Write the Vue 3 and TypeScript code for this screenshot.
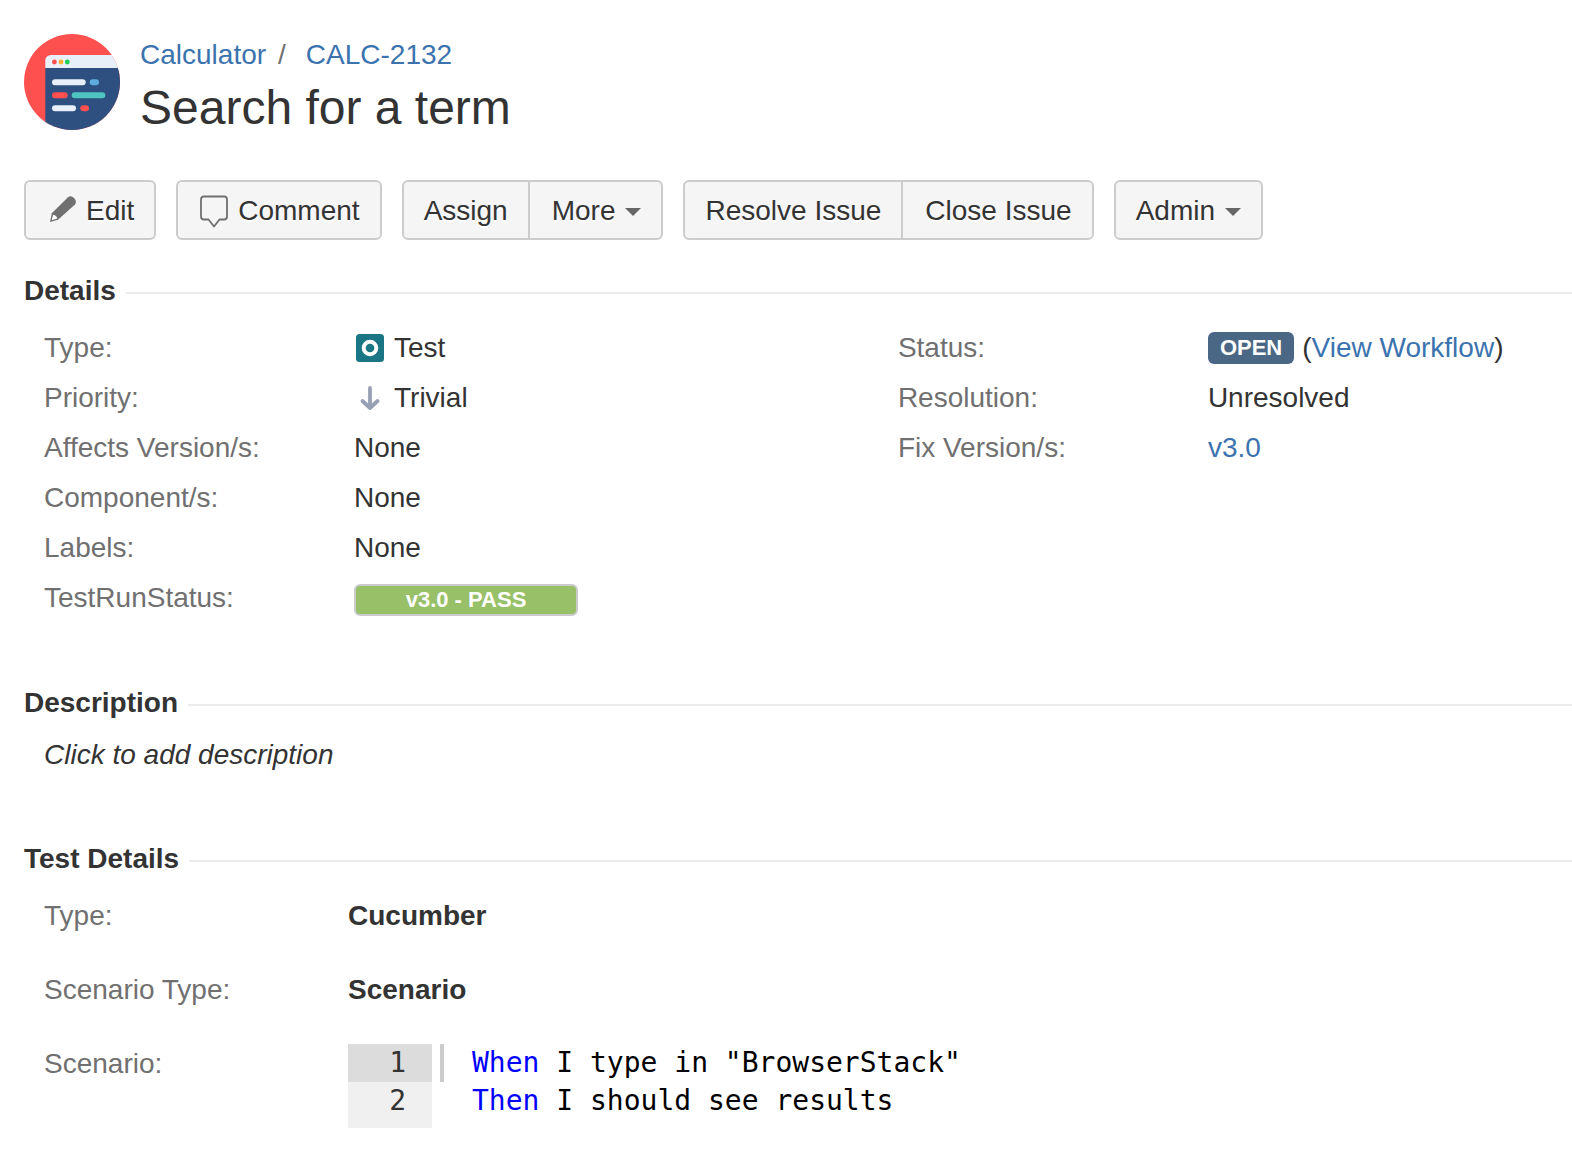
<script setup lang="ts">
interface CodeLine {
  keyword: string
  text: string
}

const codeLines: CodeLine[] = [
  { keyword: 'When', text: ' I type in "BrowserStack"' },
  { keyword: 'Then', text: ' I should see results' },
]
const activeLine = 0
</script>

<template>
  <main class="issue">
    <header class="issue-header">
      <svg class="avatar" viewBox="0 0 96 96" aria-hidden="true">
        <defs>
          <clipPath id="avatar-clip"><circle cx="48" cy="48" r="48" /></clipPath>
        </defs>
        <g clip-path="url(#avatar-clip)">
          <rect width="96" height="96" fill="#ff5050" />
          <path d="M21.3 34V26.500a5.500 5.500 0 0 1 5.500-5.500H96V34z" fill="#e9eff9" />
          <rect x="21.300" y="34" width="75" height="62" fill="#2d5080" />
          <circle cx="30.400" cy="28" r="2.400" fill="#ff5050" />
          <circle cx="37" cy="28" r="2.400" fill="#fbaf32" />
          <circle cx="43.300" cy="28" r="2.400" fill="#1cce55" />
          <rect x="28" y="45.200" width="33.700" height="6" rx="3" fill="#e9eff9" />
          <rect x="65.700" y="45.200" width="9.300" height="6" rx="3" fill="#5eacde" />
          <rect x="28" y="58.200" width="15.700" height="6" rx="3" fill="#ff5050" />
          <rect x="47.700" y="58.200" width="33.600" height="6" rx="3" fill="#4fc4c0" />
          <rect x="28" y="71.300" width="24" height="6" rx="3" fill="#e9eff9" />
          <rect x="56.300" y="71.300" width="8.700" height="6" rx="3" fill="#ff5050" />
        </g>
      </svg>
      <div class="titles">
        <nav class="crumbs" aria-label="Breadcrumb">
          <a href="#calculator">Calculator</a>
          <span class="slash">/</span>
          <a href="#CALC-2132">CALC-2132</a>
        </nav>
        <h1>Search for a term</h1>
      </div>
    </header>

    <div class="toolbar">
      <div class="group">
        <button type="button">
          <svg class="icon" viewBox="0 0 32 32" aria-hidden="true">
            <path d="M22 2.200q3-2.200 6 .8t1.200 6.200L12 24.800 4 27l1.800-8.800z" fill="#707070" />
            <path d="M7.200 19.800q3.400.6 4 3.800l-4.600 1.500-.8-.8z" fill="#fff" />
          </svg>
          Edit
        </button>
      </div>
      <div class="group">
        <button type="button">
          <svg class="icon" viewBox="0 0 32 32" aria-hidden="true">
            <path
              d="M6 1.500h20q3 0 3 3v17q0 3-3 3h-4.500L16 31.500l-5.500-7H6q-3 0-3-3v-17q0-3 3-3z"
              fill="none"
              stroke="#707070"
              stroke-width="1.800"
              stroke-linejoin="round"
            />
          </svg>
          Comment
        </button>
      </div>
      <div class="group">
        <button type="button">Assign</button>
        <button type="button">More<span class="caret"></span></button>
      </div>
      <div class="group">
        <button type="button">Resolve Issue</button>
        <button type="button">Close Issue</button>
      </div>
      <div class="group">
        <button type="button">Admin<span class="caret"></span></button>
      </div>
    </div>

    <section class="module">
      <h2>Details</h2>
      <div class="columns">
        <dl>
          <div class="row">
            <dt>Type:</dt>
            <dd>
              <svg class="icon" viewBox="0 0 32 32" aria-hidden="true">
                <rect x="2" y="2" width="28" height="28" rx="3.500" fill="#1a7585" />
                <circle cx="16" cy="16" r="6.300" fill="none" stroke="#fff" stroke-width="4" />
              </svg>
              Test
            </dd>
          </div>
          <div class="row">
            <dt>Priority:</dt>
            <dd>
              <svg class="icon" viewBox="0 0 32 32" aria-hidden="true">
                <path
                  d="M16 6v20M8.500 19l7.500 7 7.500-7"
                  fill="none"
                  stroke="#97a0b4"
                  stroke-width="3.800"
                  stroke-linecap="round"
                  stroke-linejoin="round"
                />
              </svg>
              Trivial
            </dd>
          </div>
          <div class="row">
            <dt>Affects Version/s:</dt>
            <dd>None</dd>
          </div>
          <div class="row">
            <dt>Component/s:</dt>
            <dd>None</dd>
          </div>
          <div class="row">
            <dt>Labels:</dt>
            <dd>None</dd>
          </div>
          <div class="row">
            <dt>TestRunStatus:</dt>
            <dd><span class="run-status">v3.0 - PASS</span></dd>
          </div>
        </dl>
        <dl>
          <div class="row">
            <dt>Status:</dt>
            <dd>
              <span class="status">OPEN</span>
              <span>(<a href="#workflow">View Workflow</a>)</span>
            </dd>
          </div>
          <div class="row">
            <dt>Resolution:</dt>
            <dd>Unresolved</dd>
          </div>
          <div class="row">
            <dt>Fix Version/s:</dt>
            <dd><a href="#v3.0">v3.0</a></dd>
          </div>
        </dl>
      </div>
    </section>

    <section class="module">
      <h2>Description</h2>
      <button type="button" class="add-description">Click to add description</button>
    </section>

    <section class="module">
      <h2>Test Details</h2>
      <dl class="test-details">
        <div class="row">
          <dt>Type:</dt>
          <dd>Cucumber</dd>
        </div>
        <div class="row">
          <dt>Scenario Type:</dt>
          <dd>Scenario</dd>
        </div>
        <div class="row">
          <dt>Scenario:</dt>
          <dd class="editor">
            <div
              v-for="(line, index) in codeLines"
              :key="index"
              class="code-line"
              :class="{ active: index === activeLine }"
            >
              <span class="number">{{ index + 1 }}</span>
              <code><span class="keyword">{{ line.keyword }}</span>{{ line.text }}</code>
            </div>
            <div class="gutter-end"></div>
          </dd>
        </div>
      </dl>
    </section>
  </main>
</template>

<style>
body {
  margin: 0;
  background: #fff;
}
</style>

<style scoped>
.issue {
  padding: 34px 0 28px 24px;
  font-family: "Liberation Sans", Arial, sans-serif;
  font-size: 28px;
  line-height: 40px;
  color: #333;
}

a {
  color: #3b73af;
  text-decoration: none;
}

h1,
h2,
dl,
dd {
  margin: 0;
}

.issue-header {
  display: flex;
  gap: 20px;
}

.avatar {
  flex: none;
  width: 96px;
  height: 96px;
}

.titles {
  padding-top: 1px;
}

.crumbs {
  display: flex;
  margin-bottom: 4px;
}

.slash {
  margin: 0 20px 0 12px;
  color: #707070;
}

h1 {
  font-size: 48px;
  font-weight: 400;
  line-height: 58px;
}

.toolbar {
  display: flex;
  flex-wrap: wrap;
  gap: 20px;
  margin-top: 43px;
}

.group {
  display: flex;
}

.icon {
  flex: none;
  width: 32px;
  height: 32px;
  margin-right: 8px;
  overflow: visible;
}

.group button {
  display: flex;
  align-items: center;
  height: 60px;
  padding: 2px 20px 0;
  border: 2px solid #ccc;
  background: #f5f5f5;
  font: inherit;
  color: #333;
  text-shadow: 0 2px 0 #fff;
}

.group button:first-child {
  border-top-left-radius: 6px;
  border-bottom-left-radius: 6px;
}

.group button:last-child {
  border-top-right-radius: 6px;
  border-bottom-right-radius: 6px;
}

.group button + button {
  margin-left: -2px;
  padding-left: 22px;
}

.caret {
  margin-left: 10px;
  border: 8px solid transparent;
  border-top-color: #666;
  border-bottom: 0;
  margin-top: 2px;
}

.module {
  margin-bottom: 60px;
}

.toolbar + .module {
  margin-top: 31px;
}

.module:last-child {
  margin-bottom: 0;
}

h2 {
  display: flex;
  align-items: center;
  gap: 10px;
  font-size: 28px;
  line-height: 40px;
}

h2::after {
  content: "";
  flex: 1;
  height: 2px;
  margin-top: 4px;
  background: #ebebeb;
}

.columns {
  display: grid;
  grid-template-columns: 19fr 15fr;
  margin-top: 12px;
  padding-left: 20px;
}

.row {
  display: flex;
  line-height: 50px;
}

dt {
  flex: none;
  width: 310px;
  color: #707070;
}

dd {
  display: flex;
  align-items: center;
}

.run-status,
.status {
  box-sizing: border-box;
  height: 32px;
  border-radius: 6px;
  font-size: 22px;
  font-weight: 700;
  color: #fff;
  text-align: center;
}

.run-status {
  width: 224px;
  margin-top: 4px;
  border: 2px solid #ccc;
  background: #97c068;
  line-height: 28px;
}

.status {
  margin-right: 8px;
  padding: 0 12px;
  background: #4a6785;
  line-height: 32px;
}

.add-description {
  display: block;
  margin: 8px 0 0 20px;
  padding: 0;
  border: 0;
  background: none;
  font: inherit;
  font-style: italic;
  line-height: 48px;
  color: #333;
}

.test-details {
  display: flex;
  flex-direction: column;
  gap: 24px;
  margin-top: 12px;
  padding-left: 20px;
}

.test-details dt {
  width: 304px;
}

.test-details dd {
  font-weight: 700;
}

.test-details .editor {
  display: block;
  margin-top: 5px;
  font-weight: 400;
}

.code-line {
  display: flex;
  font-family: "DejaVu Sans Mono", monospace;
  line-height: 38px;
  color: #000;
}

.number,
.gutter-end {
  box-sizing: border-box;
  width: 84px;
  margin-right: 8px;
  padding-right: 26px;
  background: #f0f0f0;
  color: #333;
  text-align: right;
}

.gutter-end {
  height: 8px;
}

code {
  padding-left: 28px;
  border-left: 4px solid transparent;
  font-family: inherit;
  white-space: pre;
}

.active .number {
  background: #dcdcdc;
}

.active code {
  border-left-color: #ccc;
}

.keyword {
  color: #00f;
}
</style>
